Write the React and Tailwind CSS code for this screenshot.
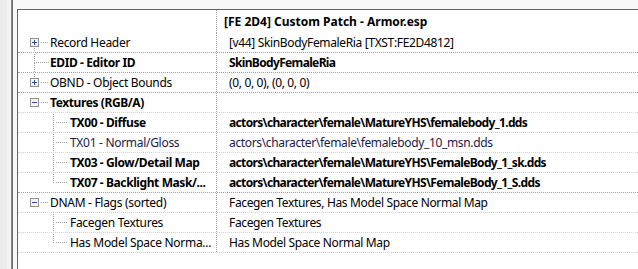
import React from 'react';

// one row of the record tree
const rows = [
  { label: 'Record Header', value: '[v44] SkinBodyFemaleRia [TXST:FE2D4812]', level: 0, box: 'plus', up: false, down: true, line: 'dark' },
  { label: 'EDID - Editor ID', value: 'SkinBodyFemaleRia', level: 0, bold: true, up: true, down: true, line: 'dark' },
  { label: 'OBND - Object Bounds', value: '(0, 0, 0), (0, 0, 0)', level: 0, box: 'plus', up: true, line: 'dark' },
  { label: 'Textures (RGB/A)', value: '', level: 0, box: 'minus', bold: true, line: 'light' },
  { label: 'TX00 - Diffuse', value: 'actors\\character\\female\\MatureYHS\\femalebody_1.dds', level: 1, bold: true, down: true, line: 'light' },
  { label: 'TX01 - Normal/Gloss', value: 'actors\\character\\female\\femalebody_10_msn.dds', level: 1, navy: true, down: true, line: 'light' },
  { label: 'TX03 - Glow/Detail Map', value: 'actors\\character\\female\\MatureYHS\\FemaleBody_1_sk.dds', level: 1, bold: true, down: true, line: 'light' },
  { label: 'TX07 - Backlight Mask/...', value: 'actors\\character\\female\\MatureYHS\\FemaleBody_1_S.dds', level: 1, bold: true, down: false, line: 'dark' },
  { label: 'DNAM - Flags (sorted)', value: 'Facegen Textures, Has Model Space Normal Map', level: 0, box: 'minus', line: 'light' },
  { label: 'Facegen Textures', value: 'Facegen Textures', level: 1, down: true, line: 'light' },
  { label: 'Has Model Space Norma...', value: 'Has Model Space Normal Map', level: 1, down: false, line: 'light' },
];

const dot = '#a0a0a0';

const Dotted = ({ x1, y1, x2, y2 }) => (
  <line
    x1={x1 + 0.5}
    y1={y1 + 0.5}
    x2={x2 + 0.5}
    y2={y2 + 0.5}
    stroke={dot}
    strokeWidth="1"
    strokeDasharray="1 1"
    shapeRendering="crispEdges"
  />
);

const Expander = ({ kind }) => (
  <g shapeRendering="crispEdges">
    <rect x="12.5" y="5.5" width="8" height="8" fill="#f4f4f4" stroke="#919191" />
    <line x1="14" y1="9.5" x2="19" y2="9.5" stroke="#2c4c9c" />
    {kind === 'plus' && <line x1="16.5" y1="7" x2="16.5" y2="12" stroke="#2c4c9c" />}
  </g>
);

const TreeGlyph = ({ row }) => (
  <svg width="52" height="19" className="shrink-0">
    {row.level === 0 && (
      <>
        {row.up && <Dotted x1={16} y1={0} x2={16} y2={row.box ? 4 : 9} />}
        {row.down && <Dotted x1={16} y1={row.box ? 14 : 9} x2={16} y2={19} />}
        {row.box ? <Expander kind={row.box} /> : null}
        <Dotted x1={row.box ? 22 : 17} y1={9} x2={30} y2={9} />
      </>
    )}
    {row.level === 1 && (
      <>
        <Dotted x1={35} y1={0} x2={35} y2={row.down ? 19 : 9} />
        <Dotted x1={37} y1={9} x2={49} y2={9} />
      </>
    )}
  </svg>
);

export default function App() {
  return (
    <div
      className="flex h-[269px] w-[638px] overflow-hidden bg-white text-[12px] text-black"
      style={{ fontFamily: '"Noto Sans", "Open Sans", sans-serif' }}
    >
      {/* window frame on the left */}
      <div className="w-[7px] bg-[#ececec]" />
      <div className="w-[4px] bg-[#f3f3f3]" />
      <div className="w-[1px] bg-[#8a8a8a]" />
      <div className="w-[1px] bg-[#6a6a6a]" />
      <div className="w-[4px] bg-[#f9f9f9]" />

      <div className="flex flex-1 flex-col">
        <div className="h-[9px] bg-[#f8f8f8]" />
        <div className="flex-1 border-l border-t border-[#646464] bg-white">
          {/* header */}
          <div className="flex h-[23px]">
            <div className="w-[199px] border-r border-dotted border-[#a0a0a0]" />
            <div className="flex items-center pl-[7px] pt-[1px] font-bold leading-none">
              [FE 2D4] Custom Patch - Armor.esp
            </div>
          </div>

          {rows.map((row, i) => (
            <div
              key={i}
              className={`flex h-[20px] border-b border-dotted ${row.line === 'dark' ? 'border-[#a0a0a0]' : 'border-[#d4d4d4]'}`}
            >
              <div className="flex w-[199px] items-center border-r border-dotted border-[#a0a0a0]">
                <TreeGlyph row={row} />
                <span
                  className={`whitespace-nowrap pt-[1px] leading-none ${row.level === 0 ? '-ml-[20px]' : ''} ${row.bold ? 'font-bold tracking-[-0.4px]' : 'tracking-[-0.3px]'} ${row.navy ? 'text-[#1c1a48]' : ''}`}
                >
                  {row.label}
                </span>
              </div>
              <div
                className={`flex items-center whitespace-nowrap pl-[12px] pt-[1px] leading-none ${row.bold ? 'font-bold tracking-[-0.65px]' : 'tracking-[-0.35px]'} ${row.navy ? 'text-[#1c1a48]' : ''}`}
              >
                {row.value}
              </div>
            </div>
          ))}
        </div>
      </div>
    </div>
  );
}
